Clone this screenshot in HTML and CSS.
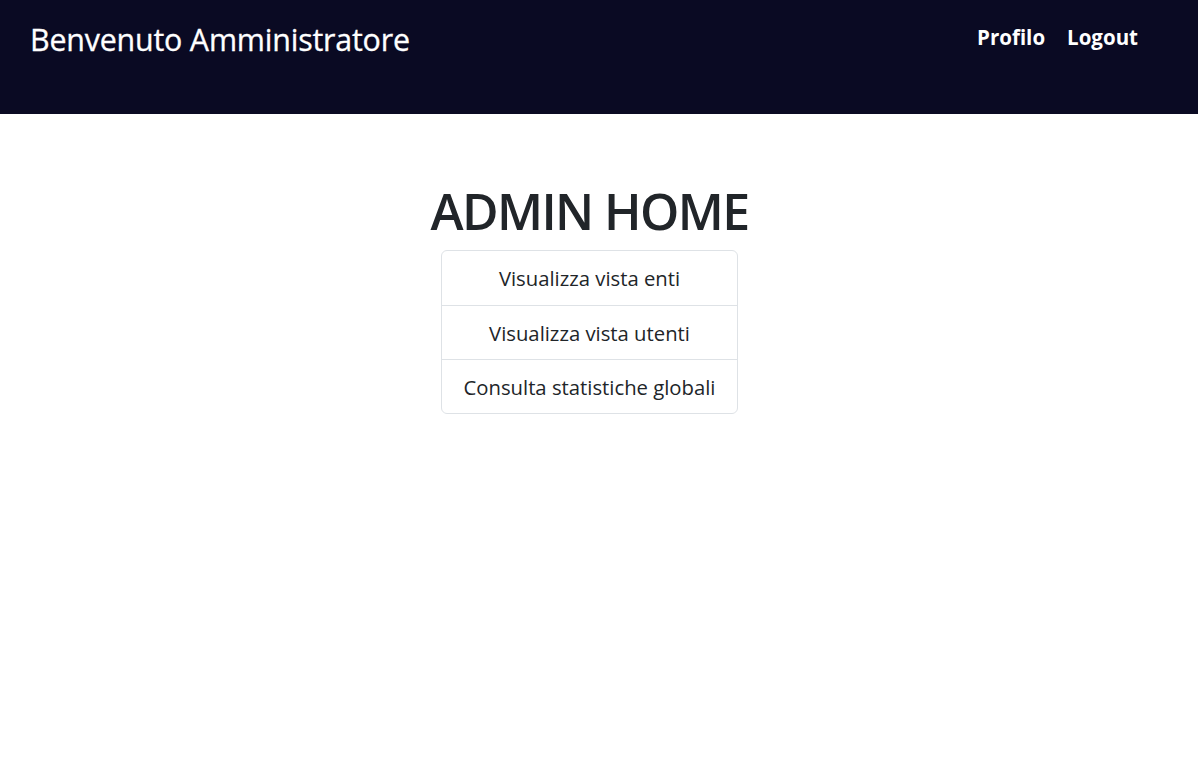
FILE: index.html
```html
<!DOCTYPE html>
<html lang="it">
<head>
<meta charset="utf-8">
<title>Admin Home</title>
<link rel="stylesheet" href="styles.css">
</head>
<body>
<header class="topbar">
  <h2 class="brand">Benvenuto Amministratore</h2>
  <nav class="topnav">
    <a href="#" class="navlink">Profilo</a>
    <a href="#" class="navlink">Logout</a>
  </nav>
</header>
<main class="content">
  <h1 class="page-title">ADMIN HOME</h1>
  <ul class="menu-list">
    <li class="menu-item"><a href="#">Visualizza vista enti</a></li>
    <li class="menu-item"><a href="#">Visualizza vista utenti</a></li>
    <li class="menu-item"><a href="#">Consulta statistiche globali</a></li>
  </ul>
</main>
</body>
</html>
```
FILE: styles.css
```css
* { box-sizing: border-box; }
html, body { margin: 0; padding: 0; background: #fff; }
body {
  font-family: "Open Sans", "Noto Sans", sans-serif;
  color: #212529;
}
.topbar {
  background: #0a0a23;
  height: 114px;
  display: flex;
  justify-content: space-between;
  align-items: flex-start;
  padding: 0 60px 0 30px;
}
.brand {
  margin: 0;
  padding-top: 19px;
  color: #fff;
  font-weight: 400;
  font-size: 30.4px;
  line-height: 42px;
  letter-spacing: -0.2px;
  -webkit-text-stroke: 0.3px #fff;
}
.topnav {
  display: flex;
  gap: 22px;
  padding-top: 21px;
}
.navlink {
  color: #fff;
  text-decoration: none;
  font-weight: 700;
  font-size: 20.5px;
  line-height: 32px;
}
.content {
  padding-right: 19px;
  padding-top: 64px;
  display: flex;
  flex-direction: column;
  align-items: center;
}
.page-title {
  margin: 0 0 6px;
  font-size: 50px;
  font-weight: 600;
  line-height: 66px;
  letter-spacing: -1.6px;
  color: #212529;
}
.menu-list {
  list-style: none;
  margin: 0;
  padding: 0;
  width: 297px;
  border: 1px solid #dee2e6;
  border-radius: 6px;
}
.menu-item {
  text-align: center;
  height: 54px;
  display: flex;
  align-items: center;
  justify-content: center;
}
.menu-item + .menu-item { border-top: 1px solid #dee2e6; }
.menu-item a {
  color: #212529;
  text-decoration: none;
  font-size: 20.3px;
  line-height: 30px;
}
```
